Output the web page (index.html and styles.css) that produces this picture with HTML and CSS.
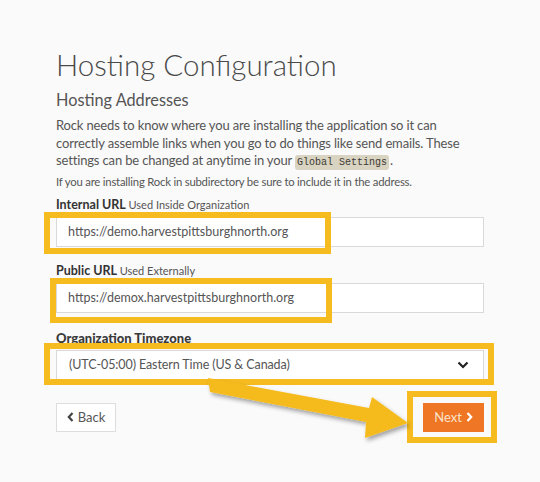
FILE: index.html
```html
<!DOCTYPE html>
<html>
<head>
    <title>Hosting Configuration</title>
    <link rel="stylesheet" href="styles.css">
</head>
<body>
    <div class="page">
        <h1 class="page-title">Hosting Configuration</h1>
        <h2 class="section-title">Hosting Addresses</h2>
        <p class="intro">Rock needs to know where you are installing the application so it can correctly assemble links when you go to do things like send emails. These settings can be changed at anytime in your <code>Global Settings</code>.</p>
        <p class="hint">If you are installing Rock in subdirectory be sure to include it in the address.</p>

        <div class="form-group">
            <label class="control-label">Internal URL <small>Used Inside Organization</small></label>
            <div class="form-control">https://demo.harvestpittsburghnorth.org</div>
        </div>

        <div class="form-group">
            <label class="control-label">Public URL <small>Used Externally</small></label>
            <div class="form-control">https://demox.harvestpittsburghnorth.org</div>
        </div>

        <div class="form-group">
            <label class="control-label label-alt">Organization Timezone</label>
            <div class="form-control select">
                <span>(UTC-05:00) Eastern Time (US &amp; Canada)</span>
                <svg class="caret" width="12" height="8" viewBox="0 0 12 8"><path d="M1.5 1.5 L6 6 L10.5 1.5" fill="none" stroke="#222" stroke-width="2.2"/></svg>
            </div>
        </div>

        <div class="actions">
            <div class="btn btn-default">
                <svg width="7" height="10" viewBox="0 0 7 10"><path d="M5.5 1 L1.8 5 L5.5 9" fill="none" stroke="#444" stroke-width="2.2"/></svg>
                Back
            </div>
            <div class="btn btn-primary">
                Next
                <svg width="7" height="10" viewBox="0 0 7 10"><path d="M1.5 1 L5.2 5 L1.5 9" fill="none" stroke="#fff" stroke-width="2.2"/></svg>
            </div>
        </div>
    </div>

    <!-- screenshot annotations -->
    <div class="mark mark-internal"></div>
    <div class="mark mark-public"></div>
    <div class="mark mark-timezone"></div>
    <div class="mark mark-next"></div>
    <svg class="arrow" width="540" height="482" viewBox="0 0 540 482">
        <defs>
            <filter id="shadow" x="-10%" y="-30%" width="130%" height="180%">
                <feDropShadow dx="2" dy="3" stdDeviation="2" flood-color="#000" flood-opacity="0.35"/>
            </filter>
        </defs>
        <polygon points="208,378 369,408 372,397 408,423 365,438 366,422 210,392" fill="#f5bb1f" filter="url(#shadow)"/>
    </svg>
</body>
</html>
```

FILE: styles.css
```css
body {
    margin: 0;
    background-color: #fafafa;
    font-family: Lato, Arial, sans-serif;
    color: #555;
}

.page {
    width: 428px;
    padding: 47px 0 0 56px;
}

.page-title {
    margin: 0;
    font-size: 29.5px;
    font-weight: 300;
    line-height: 36px;
    color: #4a4a4a;
}

.section-title {
    margin: 5px 0 0;
    font-size: 16.3px;
    font-weight: 400;
    line-height: 24px;
    color: #555;
}

.intro {
    margin: 5px 0 0;
    font-size: 13px;
    letter-spacing: -0.15px;
    line-height: 17.5px;
}

.intro code {
    font-family: "Liberation Mono", monospace;
    font-size: 10px;
    letter-spacing: 0;
    color: #3c3a33;
    background-color: #d9d3c2;
    padding: 2px;
    margin-right: 1px;
    border-radius: 3px;
}

.hint {
    margin: 2px 0 0;
    font-size: 11.3px;
    letter-spacing: -0.2px;
    line-height: 15px;
}

.form-group {
    margin-top: 8px;
}

.form-group + .form-group {
    margin-top: 16.5px;
}

.control-label {
    display: block;
    font-size: 12.5px;
    font-weight: 700;
    line-height: 16px;
    color: #333;
    margin-bottom: 4px;
}

.control-label small {
    font-size: 11px;
    font-weight: 400;
    color: #555;
}

.label-alt {
    font-size: 13px;
    font-weight: 900;
    color: #3a3a3a;
}

.form-control {
    height: 30px;
    box-sizing: border-box;
    border: 1px solid #d9d9d9;
    background-color: #fff;
    padding: 0 11px;
    font-size: 12.5px;
    line-height: 28px;
    color: #555;
}

.select {
    display: flex;
    justify-content: space-between;
    align-items: center;
    padding-left: 12px;
    padding-right: 14px;
    letter-spacing: -0.1px;
}

.actions {
    display: flex;
    justify-content: space-between;
    margin-top: 23px;
}

.btn {
    height: 29px;
    box-sizing: border-box;
    display: flex;
    align-items: center;
    justify-content: center;
    gap: 4px;
    font-size: 13px;
}

.btn-default {
    width: 60px;
    background-color: #fff;
    border: 1px solid #ddd;
    color: #555;
}

.btn-primary {
    width: 61px;
    background-color: #ee7625;
    color: #fde3cc;
}

.mark {
    position: absolute;
    box-sizing: border-box;
    border: 6px solid #f5bb1f;
}

.mark-internal {
    left: 44px;
    top: 212px;
    width: 287px;
    height: 42px;
}

.mark-public {
    left: 50px;
    top: 278px;
    width: 282px;
    height: 45px;
}

.mark-timezone {
    left: 44px;
    top: 343px;
    width: 450px;
    height: 42px;
}

.mark-next {
    left: 407px;
    top: 391px;
    width: 90px;
    height: 52px;
}

.arrow {
    position: absolute;
    left: 0;
    top: 0;
}
```
